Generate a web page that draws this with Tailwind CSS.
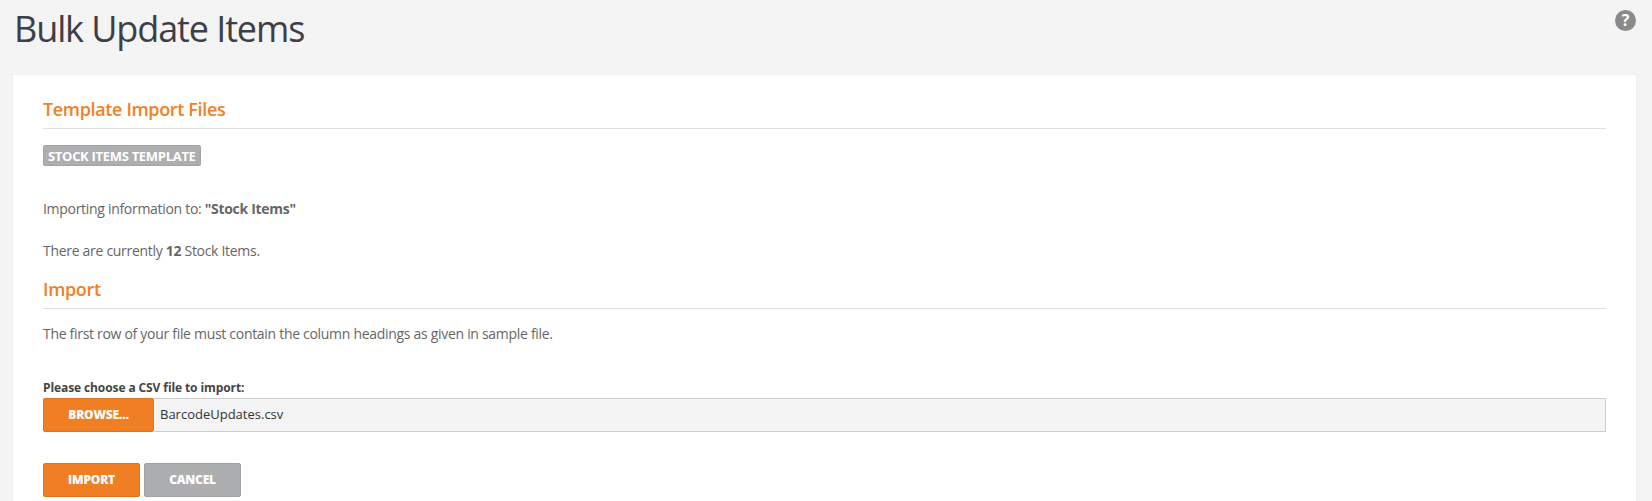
<!DOCTYPE html>
<html lang="en">
<head>
  <meta charset="UTF-8"/>
  <meta name="viewport" content="width=device-width,initial-scale=1"/>
  <title>Bulk Update Items</title>
  <script src="https://cdn.jsdelivr.net/npm/@tailwindcss/browser@4"></script>
</head>
<body class="bg-[#f4f4f4] h-[501px] overflow-hidden font-['Open_Sans',sans-serif] text-[#666]">

  <!-- page header -->
  <header class="h-[74px] pl-[14px] pr-[16px] flex justify-between items-start">
    <h1 class="text-[36px] leading-[58px] tracking-[-1.1px] font-medium text-[#3d3e46]">Bulk Update Items</h1>
    <div class="mt-[10px] w-[21px] h-[21px] rounded-full bg-[#8a8a8a] text-white text-[16px] leading-[21px] font-bold text-center">?</div>
  </header>

  <!-- card -->
  <main class="ml-[12px] w-[1625px] h-[427px] bg-white border border-b-0 border-[#efefef] px-[30px]">
    <h2 class="mt-[18px] text-[18px] leading-[32px] tracking-[-0.35px] font-semibold text-[#f37f22] border-b border-[#e0e0e0] h-[36px]">Template Import Files</h2>

    <a class="mt-[16px] inline-block align-top h-[21px] px-[4px] bg-[#adaeb0] border border-[#a2a3a5] rounded-[2px] text-white text-[13px] leading-[20px] tracking-[-0.3px] font-bold">STOCK ITEMS TEMPLATE</a>

    <p class="mt-[33px] text-[14px] leading-[20px] tracking-[-0.3px]">Importing information to: <b class="font-bold">"Stock Items"</b></p>
    <p class="mt-[22px] text-[14px] leading-[20px] tracking-[-0.3px]">There are currently <b class="font-bold">12</b> Stock Items.</p>

    <h2 class="mt-[12px] text-[18px] leading-[32px] tracking-[-0.35px] font-semibold text-[#f37f22] border-b border-[#e0e0e0] h-[36px]">Import</h2>
    <p class="mt-[15px] text-[14px] leading-[20px] tracking-[-0.3px]">The first row of your file must contain the column headings as given in sample file.</p>

    <label class="block mt-[36px] text-[12px] leading-[16px] tracking-[-0.1px] font-bold text-[#444]">Please choose a CSV file to import:</label>
    <div class="mt-[2px] flex h-[34px]">
      <button class="w-[111px] bg-[#ef7f22] border border-[#e0731b] rounded-[2px] text-white text-[12px] tracking-[-0.2px] font-extrabold">BROWSE...</button>
      <div class="flex-1 bg-[#f4f4f4] border border-[#ccc] border-l-0 pl-[6px] text-[13px] leading-[31px] text-[#333]">BarcodeUpdates.csv</div>
    </div>

    <div class="mt-[31px] flex gap-[4px]">
      <button class="w-[97px] h-[34px] bg-[#ef7f22] border border-[#e0731b] rounded-[2px] text-white text-[12px] tracking-[-0.2px] font-extrabold">IMPORT</button>
      <button class="w-[97px] h-[34px] bg-[#adaeb0] border border-[#a2a3a5] rounded-[2px] text-white text-[12px] tracking-[-0.2px] font-extrabold">CANCEL</button>
    </div>
  </main>
</body>
</html>
